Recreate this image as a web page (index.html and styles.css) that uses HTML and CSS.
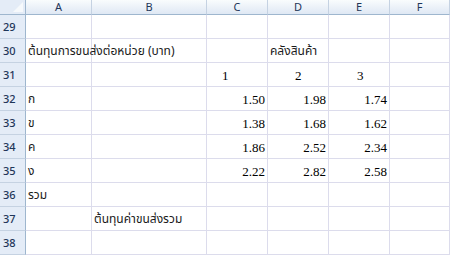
FILE: index.html
```html
<!DOCTYPE html>
<html lang="th">
  <head>
    <meta charset="UTF-8" />
    <title>Sheet</title>
    <link rel="stylesheet" href="styles.css">
  </head>
  <body>
    <div class="sheet">
      <div class="corner"><span class="tri"></span></div>
      <div class="col-head">A</div>
      <div class="col-head">B</div>
      <div class="col-head">C</div>
      <div class="col-head">D</div>
      <div class="col-head">E</div>
      <div class="col-head">F</div>

      <div class="row-head">29</div>
      <div class="cell"></div><div class="cell"></div><div class="cell"></div>
      <div class="cell"></div><div class="cell"></div><div class="cell"></div>

      <div class="row-head">30</div>
      <div class="cell thai overflow">ต้นทุนการขนส่งต่อหน่วย (บาท)</div><div class="cell"></div><div class="cell"></div>
      <div class="cell thai">คลังสินค้า</div><div class="cell"></div><div class="cell"></div>

      <div class="row-head">31</div>
      <div class="cell"></div><div class="cell"></div>
      <div class="cell num-left c1">1</div>
      <div class="cell num-left c2">2</div>
      <div class="cell num-left c3">3</div>
      <div class="cell"></div>

      <div class="row-head">32</div>
      <div class="cell thai">ก</div><div class="cell"></div>
      <div class="cell num">1.50</div><div class="cell num">1.98</div><div class="cell num">1.74</div>
      <div class="cell"></div>

      <div class="row-head">33</div>
      <div class="cell thai">ข</div><div class="cell"></div>
      <div class="cell num">1.38</div><div class="cell num">1.68</div><div class="cell num">1.62</div>
      <div class="cell"></div>

      <div class="row-head">34</div>
      <div class="cell thai">ค</div><div class="cell"></div>
      <div class="cell num">1.86</div><div class="cell num">2.52</div><div class="cell num">2.34</div>
      <div class="cell"></div>

      <div class="row-head">35</div>
      <div class="cell thai">ง</div><div class="cell"></div>
      <div class="cell num">2.22</div><div class="cell num">2.82</div><div class="cell num">2.58</div>
      <div class="cell"></div>

      <div class="row-head">36</div>
      <div class="cell thai">รวม</div><div class="cell"></div><div class="cell"></div>
      <div class="cell"></div><div class="cell"></div><div class="cell"></div>

      <div class="row-head">37</div>
      <div class="cell"></div><div class="cell thai">ต้นทุนค่าขนส่งรวม</div><div class="cell"></div>
      <div class="cell"></div><div class="cell"></div><div class="cell"></div>

      <div class="row-head">38</div>
      <div class="cell"></div><div class="cell"></div><div class="cell"></div>
      <div class="cell"></div><div class="cell"></div><div class="cell"></div>
    </div>
  </body>
</html>
```

FILE: styles.css
```css
body {
  margin: 0;
  padding: 0;
  background-color: #ffffff;
  font-family: "Liberation Serif", serif;
}

.sheet {
  display: grid;
  grid-template-columns: 26px 66px 115px 61px 61px 61px 60px;
  grid-template-rows: 15px repeat(10, 24px);
  width: 450px;
  overflow: hidden;
}

.corner {
  position: relative;
  background-color: #e4ecf7;
  border-right: 1px solid #9eb6ce;
  border-bottom: 1px solid #9eb6ce;
  box-sizing: border-box;
}

.corner .tri {
  position: absolute;
  right: 2px;
  bottom: 2px;
  width: 0;
  height: 0;
  border-left: 10px solid transparent;
  border-bottom: 10px solid #f6f9fc;
}

.col-head {
  background: linear-gradient(#f9fcfd, #dfe8f4);
  border-right: 1px solid #c5d2e2;
  border-bottom: 1px solid #9eb6ce;
  box-sizing: border-box;
  font-family: "Noto Sans", sans-serif;
  font-size: 11px;
  color: #1f3659;
  text-align: center;
  line-height: 14px;
}

.row-head {
  background-color: #e4ecf7;
  border-right: 1px solid #9eb6ce;
  border-bottom: 1px solid #c5d2e2;
  box-sizing: border-box;
  font-family: "Noto Sans", sans-serif;
  font-size: 11px;
  font-weight: 500;
  color: #1f3659;
  padding-left: 3px;
  line-height: 24px;
}

.cell {
  border-right: 1px solid #dcdcec;
  border-bottom: 1px solid #dcdcec;
  box-sizing: border-box;
  font-size: 13px;
  color: #000000;
  line-height: 25px;
  white-space: nowrap;
  padding-left: 2px;
}

.thai {
  font-family: "Noto Sans Thai", "Tahoma", "DejaVu Sans", sans-serif;
  font-size: 12px;
  color: #1a1a1a;
}

.overflow {
  overflow: visible;
  position: relative;
  z-index: 1;
}

.num {
  text-align: right;
  padding-right: 2px;
}

.c1 {
  padding-left: 15px;
}

.c2 {
  padding-left: 27px;
}

.c3 {
  padding-left: 28px;
}
```
